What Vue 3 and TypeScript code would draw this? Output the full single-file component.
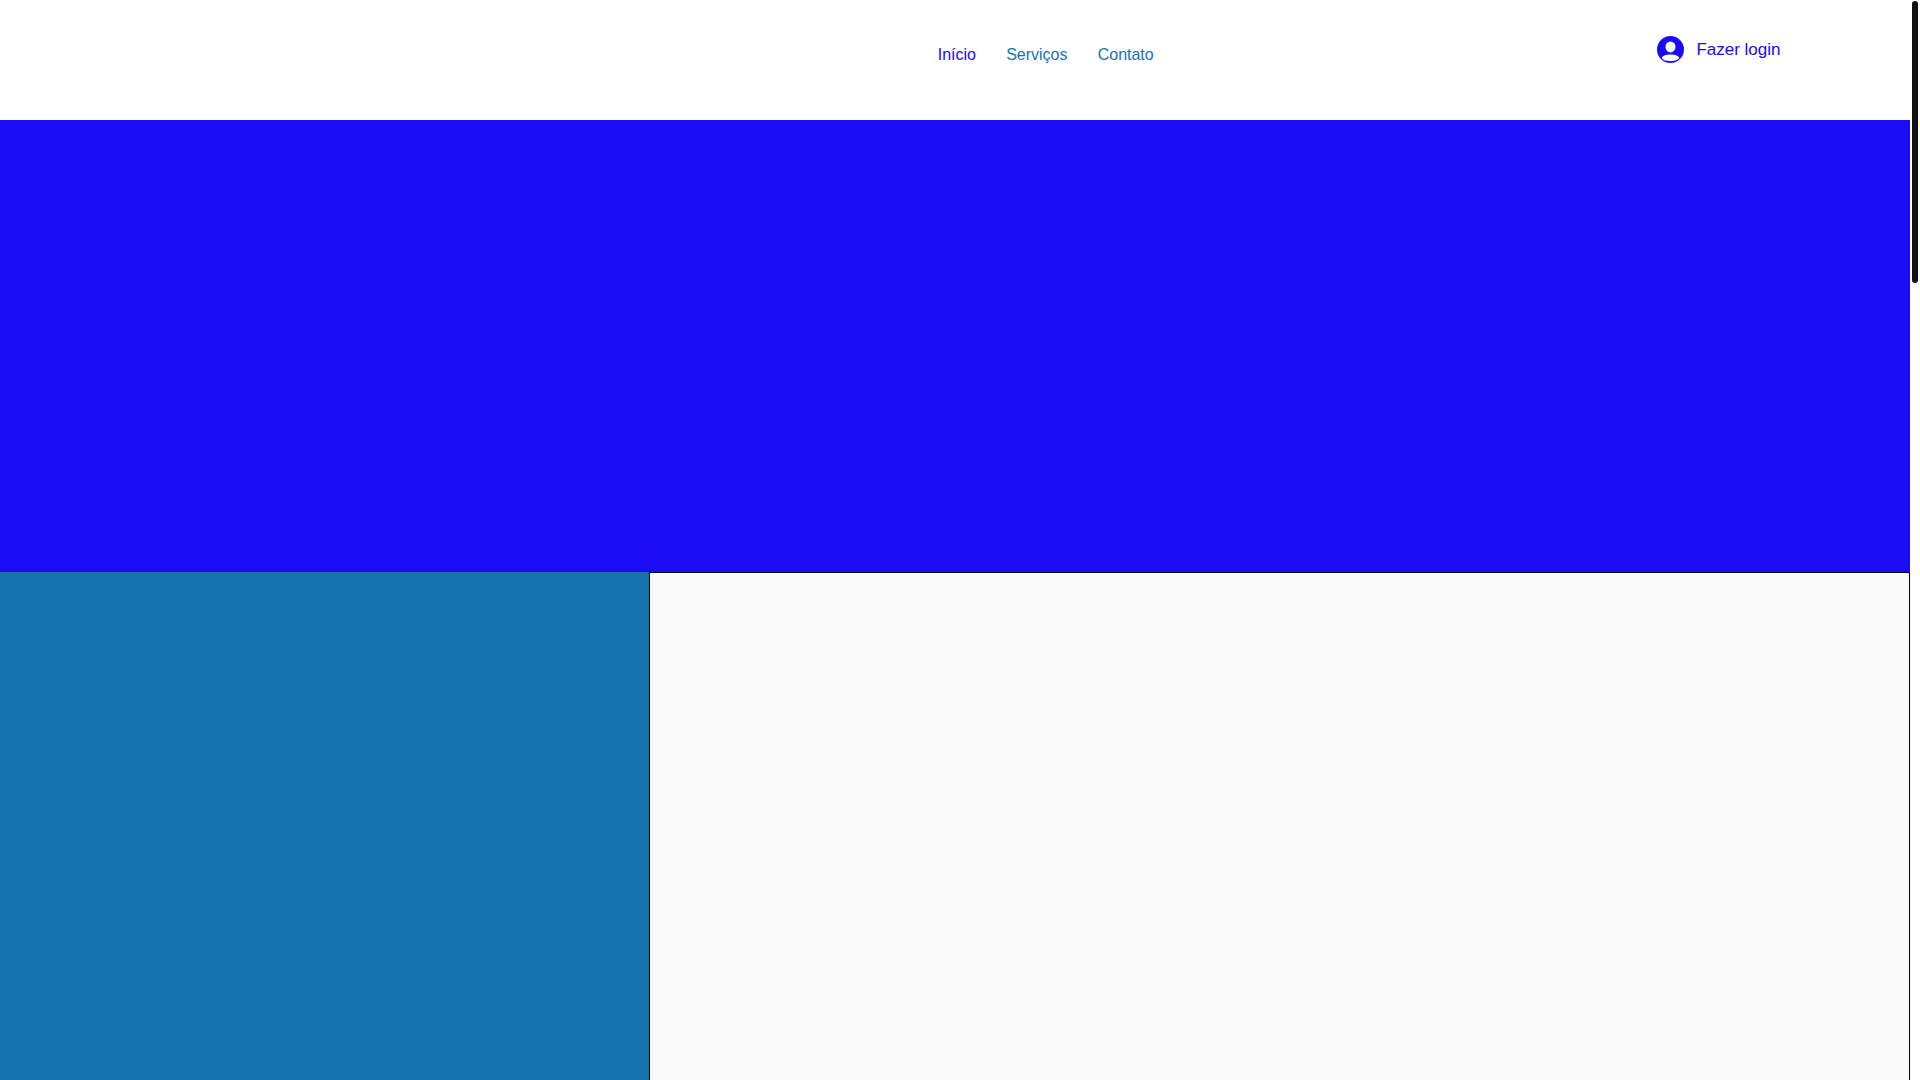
<script setup lang="ts">
const links = [
  { label: 'Início', active: true },
  { label: 'Serviços', active: false },
  { label: 'Contato', active: false },
]
</script>

<template>
  <div class="window">
    <div class="page">
      <!-- Header -->
      <header class="header">
        <nav class="nav">
          <a v-for="link in links" :key="link.label" href="#" class="nav-link" :class="{ active: link.active }">{{ link.label }}</a>
        </nav>
        <a href="#" class="login">
          <svg class="login-icon" viewBox="0 0 27 27" aria-hidden="true">
            <path fill-rule="evenodd" d="M13.500 0a13.500 13.500 0 1 0 0 27a13.500 13.500 0 0 0 0-27ZM13.500 5.400a5 5.500 0 1 1 0 11a5 5.500 0 0 1 0-11ZM13.500 18.500c4.700 0 8.600 1.500 8.600 3.300s-3.900 3.400-8.600 3.400s-8.600-1.600-8.600-3.400s3.900-3.300 8.600-3.300Z" />
          </svg>
          <span>Fazer login</span>
        </a>
      </header>

      <section class="banner"></section>

      <section class="content">
        <aside class="side"></aside>
        <div class="panel"></div>
      </section>
    </div>

    <!-- Scrollbar -->
    <div class="scrollbar"><div class="thumb"></div></div>
  </div>
</template>

<style>
html, body { margin: 0; padding: 0; overflow: hidden; background: #fff; }
</style>

<style scoped>
.window { display: flex; width: 1920px; height: 1080px; overflow: hidden; font-family: "Liberation Sans", Arial, sans-serif; }
.page { flex: 1; display: flex; flex-direction: column; min-width: 0; }

.header { height: 120px; flex-shrink: 0; display: flex; align-items: flex-start; background: #fff; }
.nav { display: flex; gap: 30.200px; padding: 46px 0 0 937.700px; }
.nav-link { font-size: 16px; line-height: 18px; color: #1574b0; text-decoration: none; }
.nav-link.active { color: #190bf3; }
.login {
  margin-left: auto; margin-right: 129.500px; padding-top: 36px;
  display: flex; align-items: center; gap: 12.500px;
  font-size: 17px; color: #190bf3; text-decoration: none;
}
.login-icon { width: 27px; height: 27px; fill: #190bf3; display: block; }

.banner { height: 452px; flex-shrink: 0; background: #190bf3; }

.content { flex: 1; display: flex; min-height: 0; }
.side { width: 649px; flex-shrink: 0; background: #1574b0; }
.panel {
  flex: 1; background: #fafafa; box-sizing: border-box;
  border: 1px solid #000; border-bottom: none;
}

.scrollbar { width: 10px; flex-shrink: 0; background: #fff; padding: 1px 2px 0; box-sizing: border-box; }
.thumb { height: 282px; background: #111; border-radius: 3px; }
</style>
